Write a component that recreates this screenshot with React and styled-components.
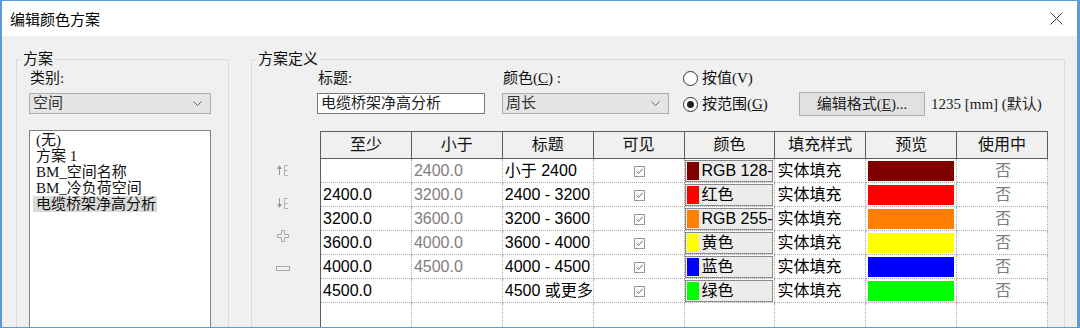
import React from "react";
import styled, { createGlobalStyle } from "styled-components";

const serif = `"Liberation Serif", "Noto Sans CJK SC", serif`;
const sans = `"Liberation Sans", "Noto Sans CJK SC", sans-serif`;

const GlobalStyle = createGlobalStyle`
  html, body {
    margin: 0;
    padding: 0;
    background: #f0f0f0;
    overflow: hidden;
  }
`;

const Window = styled.div`
  width: 1080px;
  height: 328px;
  box-sizing: border-box;
  border: 1px solid #5a9bd8;
  border-left-width: 2px;
  border-right-width: 3px;
  background: #f0f0f0;
  display: flex;
  flex-direction: column;
  overflow: hidden;
`;

const TitleBar = styled.div`
  height: 35px;
  flex-shrink: 0;
  background: #fff;
  display: flex;
  align-items: center;
  justify-content: space-between;
  padding: 0 14px 0 8px;
  font: 15px/18px "Noto Sans CJK SC", sans-serif;
  color: #000;
`;

const Body = styled.div`
  flex: 1;
  display: flex;
  align-items: flex-start;
  overflow: hidden;
`;

const GroupBox = styled.fieldset`
  margin: 15px 0 0 ${(p) => p.$ml}px;
  padding: 0;
  width: ${(p) => p.$w}px;
  height: 300px;
  min-width: 0;
  box-sizing: border-box;
  border: 1px solid #d9d9d9;
  flex-shrink: 0;
`;

const Legend = styled.legend`
  margin-left: 4px;
  padding: 0 2px;
  font: 15px/16px ${serif};
  color: #111;
`;

const LeftInner = styled.div`
  padding: 3px 0 0 12px;
`;

const Label = styled.div`
  font: 15px/16px ${serif};
  color: #111;
  padding-left: 1px;
`;

const Combo = styled.div`
  margin-top: 7px;
  width: ${(p) => p.$w}px;
  height: 21px;
  box-sizing: border-box;
  border: 1px solid #adadad;
  background: #e5e5e5;
  display: flex;
  align-items: center;
  justify-content: space-between;
  padding: 0 8px 0 3px;
  font: 15px/19px ${serif};
  color: #333;
`;

const ListBox = styled.div`
  margin-top: 16px;
  width: 182px;
  height: 230px;
  box-sizing: border-box;
  background: #fff;
  border: 1px solid #828282;
  padding: 1px 0 0 3px;
`;

const ListItem = styled.div`
  width: fit-content;
  font: 15px/16px ${serif};
  color: #111;
  padding: 0 1px 0 3px;
  background: ${(p) => (p.$selected ? "#dadada" : "transparent")};
`;

const RightInner = styled.div`
  display: flex;
  flex-direction: column;
`;

const TopRow = styled.div`
  display: flex;
  align-items: flex-start;
  padding: 3px 0 0 65px;
`;

const Field = styled.div`
  width: ${(p) => p.$w}px;
  margin-right: ${(p) => p.$mr || 0}px;
  flex-shrink: 0;
`;

const TextInput = styled.div`
  margin-top: 7px;
  width: 168px;
  height: 21px;
  box-sizing: border-box;
  border: 1px solid #7a7a7a;
  background: #fff;
  padding-left: 3px;
  font: 15px/19px ${serif};
  color: #222;
`;

const RadioGroup = styled.div`
  width: 116px;
  flex-shrink: 0;
  display: flex;
  flex-direction: column;
  gap: 10px;
`;

const RadioRow = styled.div`
  display: flex;
  align-items: center;
  gap: 4px;
  height: 16px;
  font: 15px/16px ${serif};
  color: #111;
`;

const RadioCircle = styled.span`
  position: relative;
  width: 13px;
  height: 13px;
  border: 1px solid #333;
  border-radius: 50%;
  background: #fff;
  &::after {
    content: "";
    display: ${(p) => (p.$checked ? "block" : "none")};
    position: absolute;
    left: 3px;
    top: 3px;
    width: 7px;
    height: 7px;
    border-radius: 50%;
    background: #222;
  }
`;

const U = styled.span`
  text-decoration: underline;
`;

const EditButton = styled.div`
  margin-top: 22px;
  width: 126px;
  height: 24px;
  flex-shrink: 0;
  box-sizing: border-box;
  background: #e1e1e1;
  border: 1px solid #adadad;
  display: flex;
  align-items: center;
  justify-content: center;
  font: 15px/16px ${serif};
  color: #222;
`;

const UnitText = styled.div`
  margin: 26px 0 0 6px;
  font: 15px/16px ${serif};
  color: #222;
  white-space: nowrap;
`;

const TableRow = styled.div`
  display: flex;
  margin-top: 15px;
`;

const Toolbar = styled.div`
  width: 62px;
  margin-right: 6px;
  padding-top: 22px;
  display: flex;
  flex-direction: column;
  align-items: center;
`;

const ToolSlot = styled.div`
  height: 33px;
  display: flex;
  align-items: center;
  justify-content: center;
`;

const Grid = styled.table`
  width: 728px;
  table-layout: fixed;
  border-collapse: collapse;
  background: #fff;
`;

const Th = styled.th`
  height: 26px;
  padding: 0;
  border: 1px solid #5c5c5c;
  background: #f0f0f0;
  font: 16px/18px ${sans};
  font-weight: normal;
  color: #111;
`;

const Td = styled.td`
  height: 23px;
  padding: 0 0 0 ${(p) => (p.$flush ? 0 : 2)}px;
  border-right: 1px dotted #a8a8a8;
  border-bottom: ${(p) => (p.$filler ? "none" : "1px dotted #a8a8a8")};
  border-left: ${(p) => (p.$first ? "1px solid #5c5c5c" : "none")};
  font: 16px/18px ${sans};
  color: ${(p) => (p.$muted ? "#7f7f7f" : "#000")};
  text-align: ${(p) => p.$align || "left"};
  white-space: nowrap;
  overflow: hidden;
  vertical-align: middle;
`;

const ColorChip = styled.div`
  height: 22px;
  margin-right: 1px;
  box-sizing: border-box;
  border: 1px solid #8a8a8a;
  background: #ececec;
  display: flex;
  align-items: center;
  overflow: hidden;
`;

const Swatch = styled.span`
  width: 12px;
  height: 18px;
  margin: 0 3px 0 1px;
  flex-shrink: 0;
  background: ${(p) => p.$c};
`;

const PreviewBar = styled.div`
  height: 20px;
  margin: 0 2px;
  background: ${(p) => p.$c};
`;

const Chevron = () => (
  <svg width="9" height="5" viewBox="0 0 9 5">
    <polyline points="0.5,0.5 4.5,4.5 8.5,0.5" fill="none" stroke="#666" strokeWidth="1" />
  </svg>
);

const CloseIcon = () => (
  <svg width="13" height="13" viewBox="0 0 13 13">
    <path d="M0.5 0.5 L12.5 12.5 M12.5 0.5 L0.5 12.5" stroke="#444" strokeWidth="1" />
  </svg>
);

const CheckBox = () => (
  <svg width="11" height="11" viewBox="0 0 11 11" style={{ verticalAlign: "middle" }}>
    <rect x="0.5" y="0.5" width="10" height="10" fill="#fff" stroke="#9a9a9a" />
    <polyline points="2.5,5.5 4.5,7.5 8.5,3" fill="none" stroke="#666" strokeWidth="1" />
  </svg>
);

const MoveIcon = ({ down }) => (
  <svg width="12" height="14" viewBox="0 0 12 14">
    <g fill="#9a9a9a" stroke="#9a9a9a" strokeWidth="1">
      {down ? (
        <>
          <line x1="2.5" y1="2" x2="2.5" y2="9" />
          <polygon points="0,8 5,8 2.5,12" stroke="none" />
        </>
      ) : (
        <>
          <line x1="2.5" y1="5" x2="2.5" y2="12" />
          <polygon points="0,6 5,6 2.5,2" stroke="none" />
        </>
      )}
      <path d="M11 2.5 H7.5 V12.5 H11 M7.5 7.5 H10.5" fill="none" stroke="#b0b0b0" />
    </g>
  </svg>
);

const PlusIcon = () => (
  <svg width="14" height="14" viewBox="0 0 14 14">
    <path
      d="M5.5 1.5 H8.5 V5.5 H12.5 V8.5 H8.5 V12.5 H5.5 V8.5 H1.5 V5.5 H5.5 Z"
      fill="none"
      stroke="#a8a8a8"
    />
  </svg>
);

const MinusIcon = () => (
  <svg width="14" height="6" viewBox="0 0 14 6">
    <rect x="0.5" y="0.5" width="13" height="4" fill="none" stroke="#a8a8a8" />
  </svg>
);

const headers = ["至少", "小于", "标题", "可见", "颜色", "填充样式", "预览", "使用中"];

const rows = [
  { min: "", max: "2400.0", title: "小于 2400", color: "RGB 128-", c: "#800000" },
  { min: "2400.0", max: "3200.0", title: "2400 - 3200", color: "红色", c: "#ff0000" },
  { min: "3200.0", max: "3600.0", title: "3200 - 3600", color: "RGB 255-", c: "#ff8000" },
  { min: "3600.0", max: "4000.0", title: "3600 - 4000", color: "黄色", c: "#ffff00" },
  { min: "4000.0", max: "4500.0", title: "4000 - 4500", color: "蓝色", c: "#0000ff" },
  { min: "4500.0", max: "", title: "4500 或更多", color: "绿色", c: "#00ff00" },
];

const schemes = ["(无)", "方案 1", "BM_空间名称", "BM_冷负荷空间", "电缆桥架净高分析"];

export default function App() {
  return (
    <>
      <GlobalStyle />
      <Window>
        <TitleBar>
          <span>编辑颜色方案</span>
          <CloseIcon />
        </TitleBar>
        <Body>
          <GroupBox $ml={14} $w={213}>
            <Legend>方案</Legend>
            <LeftInner>
              <Label>类别:</Label>
              <Combo $w={182}>
                <span>空间</span>
                <Chevron />
              </Combo>
              <ListBox>
                {schemes.map((s, i) => (
                  <ListItem key={s} $selected={i === schemes.length - 1}>
                    {s}
                  </ListItem>
                ))}
              </ListBox>
            </LeftInner>
          </GroupBox>

          <GroupBox $ml={22} $w={814}>
            <Legend>方案定义</Legend>
            <RightInner>
              <TopRow>
                <Field $w={168} $mr={17}>
                  <Label>标题:</Label>
                  <TextInput>电缆桥架净高分析</TextInput>
                </Field>
                <Field $w={167} $mr={14}>
                  <Label>
                    颜色(<U>C</U>) :
                  </Label>
                  <Combo $w={167}>
                    <span>周长</span>
                    <Chevron />
                  </Combo>
                </Field>
                <RadioGroup>
                  <RadioRow>
                    <RadioCircle />
                    <span>按值(V)</span>
                  </RadioRow>
                  <RadioRow>
                    <RadioCircle $checked />
                    <span>
                      按范围(<U>G</U>)
                    </span>
                  </RadioRow>
                </RadioGroup>
                <EditButton>
                  编辑格式(<U>E</U>)...
                </EditButton>
                <UnitText>1235 [mm] (默认)</UnitText>
              </TopRow>

              <TableRow>
                <Toolbar>
                  <ToolSlot>
                    <MoveIcon />
                  </ToolSlot>
                  <ToolSlot>
                    <MoveIcon down />
                  </ToolSlot>
                  <ToolSlot>
                    <PlusIcon />
                  </ToolSlot>
                  <ToolSlot>
                    <MinusIcon />
                  </ToolSlot>
                </Toolbar>
                <Grid>
                  <thead>
                    <tr>
                      {headers.map((h) => (
                        <Th key={h}>{h}</Th>
                      ))}
                    </tr>
                  </thead>
                  <tbody>
                    {rows.map((r) => (
                      <tr key={r.title}>
                        <Td $first>{r.min}</Td>
                        <Td $muted>{r.max}</Td>
                        <Td>{r.title}</Td>
                        <Td $align="center">
                          <CheckBox />
                        </Td>
                        <Td $flush>
                          <ColorChip>
                            <Swatch $c={r.c} />
                            <span>{r.color}</span>
                          </ColorChip>
                        </Td>
                        <Td>实体填充</Td>
                        <Td $flush>
                          <PreviewBar $c={r.c} />
                        </Td>
                        <Td $muted $align="center">
                          否
                        </Td>
                      </tr>
                    ))}
                    <tr>
                      {headers.map((h, i) => (
                        <Td key={h} $first={i === 0} $filler style={{ height: 60 }} />
                      ))}
                    </tr>
                  </tbody>
                </Grid>
              </TableRow>
            </RightInner>
          </GroupBox>
        </Body>
      </Window>
    </>
  );
}
